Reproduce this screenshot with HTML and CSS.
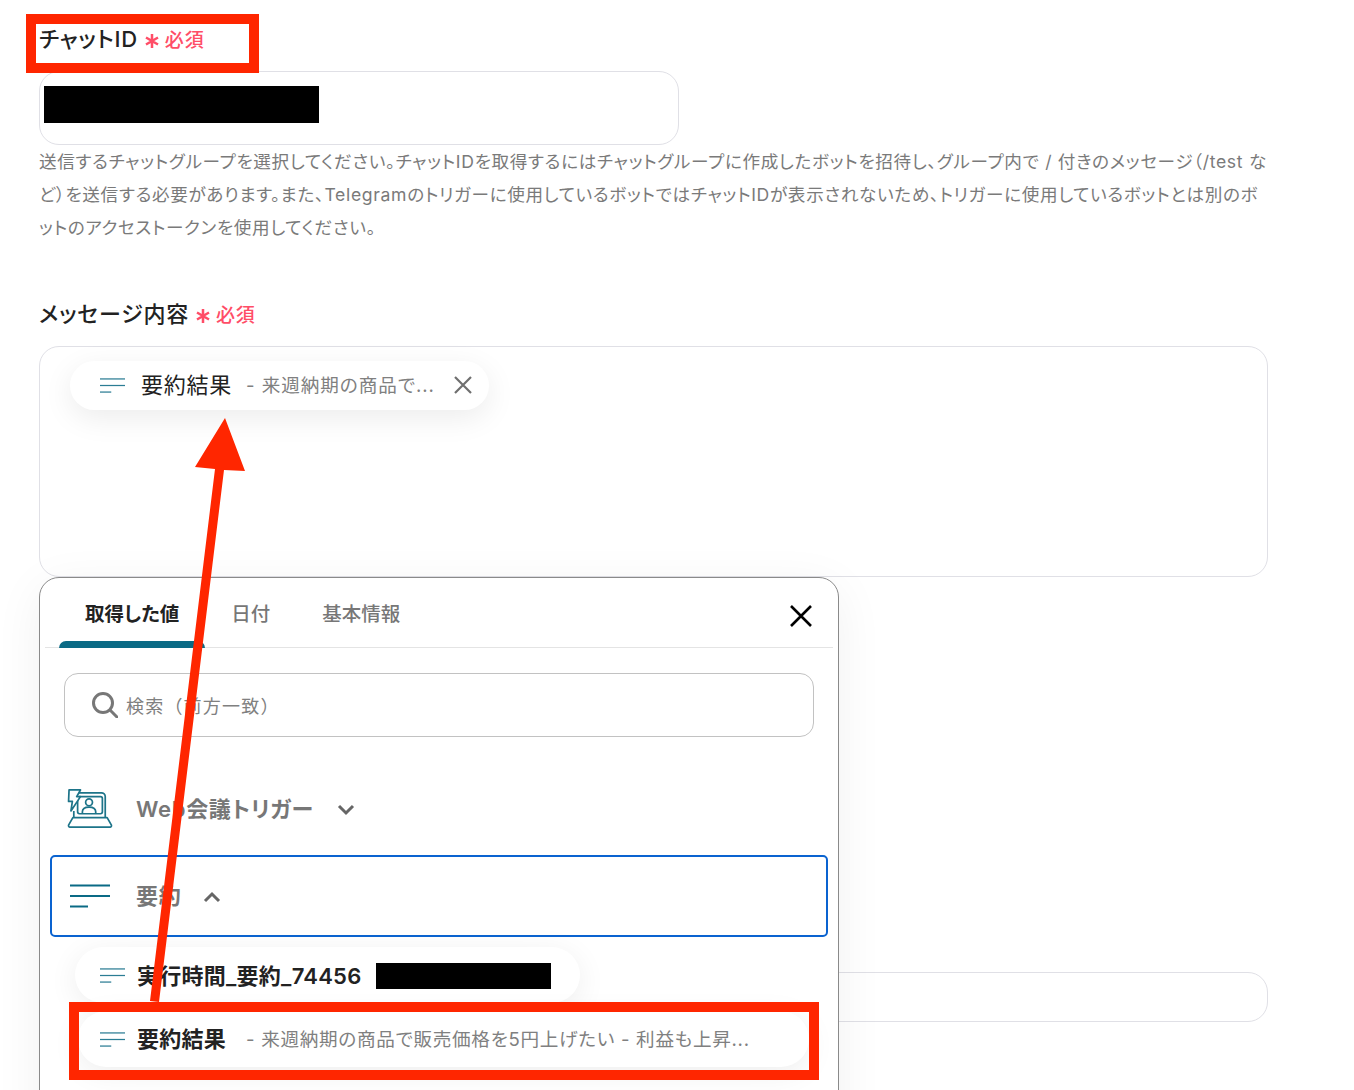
FILE: index.html
```html
<!DOCTYPE html>
<html lang="ja">
<head>
<meta charset="utf-8">
<title>メッセージ設定</title>
<link rel="stylesheet" href="styles.css">
</head>
<body>
<svg width="0" height="0" class="defs">
  <defs>
    <symbol id="lines" viewBox="0 0 40 24">
      <path d="M0 1.5H40" stroke="currentColor" stroke-width="2" />
      <path d="M0 12H40" stroke="currentColor" stroke-width="2" />
      <path d="M0 22.5H18" stroke="currentColor" stroke-width="2" />
    </symbol>
    <symbol id="star" viewBox="0 0 16 16">
      <path d="M8 1V15M2 4.5L14 11.5M14 4.5L2 11.5" stroke="currentColor" stroke-width="2.500" />
    </symbol>
  </defs>
</svg>
<main class="page">
  <section class="field first">
    <div class="label">チャットID <svg class="star"><use href="#star"/></svg><span class="req">必須</span></div>
    <div class="input"><div class="redact-id"></div></div>
    <p class="help">送信するチャットグループを選択してください。チャットIDを取得するにはチャットグループに作成したボットを招待し、グループ内で / 付きのメッセージ（/test など）を送信する必要があります。また、Telegramのトリガーに使用しているボットではチャットIDが表示されないため、トリガーに使用しているボットとは別のボットのアクセストークンを使用してください。</p>
  </section>

  <section class="field second">
    <div class="label">メッセージ内容 <svg class="star"><use href="#star"/></svg><span class="req">必須</span></div>
    <div class="textarea">
      <div class="chip">
        <svg class="chip-icon"><use href="#lines"/></svg>
        <span class="chip-name">要約結果</span>
        <span class="chip-sub">- 来週納期の商品で...</span>
        <svg class="chip-x" viewBox="0 0 18 18"><path d="M1 1L17 17M17 1L1 17"/></svg>
      </div>
    </div>
  </section>

  <div class="third-input"></div>
</main>

<aside class="popup">
  <div class="tabs">
    <div class="tab active">取得した値</div>
    <div class="tab">日付</div>
    <div class="tab">基本情報</div>
    <svg class="close" viewBox="0 0 24 24"><path d="M2 2L22 22M22 2L2 22"/></svg>
  </div>
  <div class="search">
    <svg class="search-icon" viewBox="0 0 26 26"><circle cx="11" cy="11" r="9.5"/><path d="M18 18L25 25"/></svg>
    <span class="placeholder">検索（前方一致）</span>
  </div>
  <div class="group">
    <svg class="laptop" viewBox="0 0 48 42">
      <path d="M12 4H36A4 4 0 0 1 40 8V30M7 23V30" />
      <rect x="11" y="8" width="26" height="18" rx="2" />
      <circle cx="23" cy="14" r="3.6" />
      <path d="M16 26V24C16 20.5 19 19 23 19S30 20.500 30 24V26" />
      <path d="M6 30H42L46.500 38A1.500 1.500 0 0 1 45 40H3A1.500 1.500 0 0 1 1.500 38Z" />
      <path d="M2 1H14L10 8H14L4 23L5.500 13H1.500Z" class="bolt" />
    </svg>
    <span class="group-name">Web会議トリガー</span>
    <svg class="chev" viewBox="0 0 18 12"><path d="M2 2L9 9L16 2"/></svg>
  </div>
  <div class="group selected">
    <svg class="group-lines"><use href="#lines"/></svg>
    <span class="group-name">要約</span>
    <svg class="chev" viewBox="0 0 18 12"><path d="M2 10L9 3L16 10"/></svg>
  </div>
  <div class="items">
    <div class="item short">
      <svg class="item-icon"><use href="#lines"/></svg>
      <span class="item-name">実行時間_要約_74456</span>
      <div class="redact-item"></div>
    </div>
    <div class="item long">
      <svg class="item-icon"><use href="#lines"/></svg>
      <span class="item-name">要約結果</span>
      <span class="item-sub">- 来週納期の商品で販売価格を5円上げたい - 利益も上昇...</span>
    </div>
  </div>
</aside>

<div class="mark mark-label"></div>
<div class="mark mark-item"></div>
<svg class="arrow" viewBox="0 0 1354 1090">
  <path d="M150 1001L159 1002L224 470L245 471L225 418L195 467L215 469Z"/>
</svg>
</body>
</html>
```
FILE: styles.css
```css
* { box-sizing: border-box; }
html, body { margin: 0; height: 1090px; overflow: hidden; background: #fff; }
body {
  position: relative;
  font-family: Inter, "Noto Sans CJK JP", sans-serif;
  font-feature-settings: "palt";
  color: #222;
}
.defs { position: absolute; }
.page { width: 1268px; padding-left: 39px; }
.field.first { padding-top: 23px; }
.field.second { margin-top: 54px; }
.label {
  display: flex;
  align-items: center;
  font-size: 22px;
  font-weight: 500;
  line-height: 32px;
  height: 32px;
  white-space: pre;
  letter-spacing: 0.85px;
}
.star { width: 16px; height: 16px; color: #ff4d67; margin: 4px 5px 0 -1px; }
.req { color: #ff4d67; font-size: 19px; margin-top: 4px; }
.input {
  margin-top: 16px;
  width: 640px;
  height: 74px;
  border: 1px solid #e0e0e6;
  border-radius: 20px;
  padding: 14px 4px;
}
.redact-id { width: 275px; height: 37px; background: #000; }
.help {
  margin: 0;
  color: #7a7a7a;
  font-size: 17.6px;
  line-height: 33px;
  letter-spacing: 0.67px;
}
.textarea {
  margin-top: 16px;
  height: 231px;
  border: 1px solid #e0e0e6;
  border-radius: 20px;
  padding: 14px 30px;
}
.chip {
  display: flex;
  align-items: center;
  width: 419px;
  height: 49px;
  border-radius: 25px;
  background: #fff;
  padding-left: 30px;
  box-shadow: 0 8px 30px rgba(0, 0, 0, .08);
}
.chip-icon { width: 25px; height: 15px; color: #2b7d94; flex: none; }
.chip-name { margin: 0 0 5px 16px; font-size: 22px; letter-spacing: .75px; }
.chip-sub { margin: 0 0 4px 14px; font-size: 18.6px; color: #808080; white-space: nowrap; letter-spacing: .95px; }
.chip-x { width: 18px; height: 18px; margin: 0 17px 1px auto; fill: none; stroke: #6f6f6f; stroke-width: 2.200; flex: none; }
.third-input {
  margin-top: 395px;
  height: 50px;
  border: 1px solid #e0e0e6;
  border-radius: 20px;
}
.popup {
  position: absolute;
  left: 39px;
  top: 577px;
  width: 800px;
  height: 560px;
  background: #fff;
  border: 1px solid #8a8a8a;
  border-radius: 20px;
  box-shadow: 0 10px 50px rgba(0, 0, 0, .06);
}
.tabs {
  display: flex;
  align-items: stretch;
  height: 70px;
  margin: 0 5px;
  padding-left: 14px;
  border-bottom: 1px solid #e4e4e4;
  position: relative;
}
.tab {
  padding: 22px 26px 0;
  font-size: 19.5px;
  line-height: 28px;
  font-weight: 500;
  color: #777;
}
.tab.active {
  color: #222;
  font-weight: 700;
  position: relative;
}
.tab.active::after {
  content: "";
  position: absolute;
  left: 0;
  right: 0;
  bottom: -1px;
  height: 7px;
  background: #0a6a85;
  border-radius: 7px 7px 0 0;
}
.close {
  width: 24px;
  height: 24px;
  margin: 26px 20px 0 auto;
  fill: none;
  stroke: #000;
  stroke-width: 2.600;
}
.search {
  display: flex;
  align-items: center;
  height: 64px;
  margin: 25px 24px 0;
  padding-left: 27px;
  border: 1px solid #c2c2c2;
  border-radius: 14px;
  color: #808080;
  font-size: 18px;
}
.placeholder { font-feature-settings: normal; margin-bottom: 1px; letter-spacing: 1.2px; }
.search-icon { width: 26px; height: 26px; margin-right: 8px; fill: none; stroke: #777; stroke-width: 3; flex: none; }
.search-icon path { stroke-linecap: round; }
.group {
  display: flex;
  align-items: center;
  height: 76px;
  margin: 34px 10px 0;
  padding-left: 16px;
}
.laptop { width: 46px; height: 40px; flex: none; fill: none; stroke: #1d7489; stroke-width: 1.800; stroke-linejoin: round; margin-left: 1px; }
.laptop .bolt { fill: #fff; }
.group-name { margin: 0 0 4px 23px; font-size: 22px; font-weight: 600; color: #777; letter-spacing: .7px; }
.chev { width: 18px; height: 12px; margin-left: 23px; margin-top: 2px; fill: none; stroke: #666; stroke-width: 3; }
.group.selected {
  height: 82px;
  margin-top: 8px;
  padding-left: 18px;
  border: 2px solid #0a63d0;
  border-radius: 5px;
}
.group-lines { width: 40px; height: 24px; color: #0a6a85; flex: none; }
.group.selected .group-name { margin-left: 26px; }
.group.selected .chev { margin-left: 22px; }
.items { display: flex; flex-direction: column; gap: 8px; margin: 10px 0 0 35px; }
.item {
  display: flex;
  align-items: center;
  height: 56px;
  border-radius: 28px;
  background: #fff;
  box-shadow: 0 6px 30px rgba(0, 0, 0, .07);
}
.item.short { width: 505px; padding-left: 25px; }
.item.long { width: 731px; margin-left: 3px; padding-left: 22px; }
.item-icon { width: 25px; height: 15px; color: #2b7d94; flex: none; }
.item-name { margin: 0 0 3px 12px; font-size: 22px; font-weight: 600; color: #222; white-space: nowrap; letter-spacing: .25px; }
.item.long .item-name { margin-bottom: 5px; }
.item-sub { margin: 0 0 4px 20px; font-size: 18.6px; color: #808080; white-space: nowrap; letter-spacing: .7px; }
.redact-item { width: 175px; height: 26px; margin: 2px 0 0 14px; background: #000; }
.mark {
  position: absolute;
  border: 10px solid #ff2600;
}
.mark-label { left: 26px; top: 14px; width: 233px; height: 59px; }
.mark-item { left: 69px; top: 1002px; width: 750px; height: 78px; }
.arrow { position: absolute; left: 0; top: 0; width: 1354px; height: 1090px; fill: #ff2600; pointer-events: none; }
```
